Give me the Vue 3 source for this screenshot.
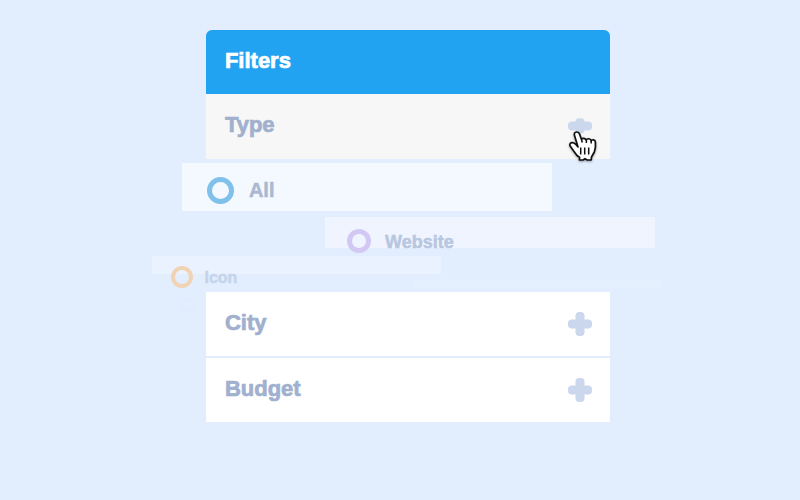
<script setup>
const options = [
  { key: 'all', label: 'All' },
  { key: 'website', label: 'Website' },
  { key: 'icon', label: 'Icon' },
  { key: 'last', label: '' }
]
const sections = ['City', 'Budget']
</script>

<template>
  <main class="stage">
    <section class="filters">
      <header class="row head">Filters</header>
      <div class="row type">
        <span>Type</span>
        <span class="toggle">
          <svg class="plus" viewBox="0 0 24 16" width="24" height="16">
            <rect x="7.5" y="0.3" width="9" height="15" rx="3.5" />
            <rect x="0" y="3.5" width="24" height="9" rx="4" />
          </svg>
          <svg class="cursor" viewBox="0 0 30 32" width="30" height="32">
            <path d="M8.5 2C6.5 2 6 3.8 6.5 5.5L10 17C8.5 15 6.5 12.8 4.6 12.6C2.5 12.4 1.3 14 2 15.8L5.5 20.8L9 25.5L11.5 27.3V30H15L17 28.7L19.2 30H23.2L23.5 27L26.3 22L27.4 17.5V12C27.2 9.5 24 9 23.2 11C22.8 8.3 19.2 8 18.2 10.2C17.5 8 14.5 7.8 13.5 9.4L11.3 3.5C10.6 2.4 9.6 2 8.5 2Z" />
            <path class="lines" d="M13.6 9.8L14.3 12.5M18.4 10.5V13M23.2 11V13.5M12.7 17.5v7M16.7 17.5v7M20.7 17.5v7" />
          </svg>
        </span>
      </div>
      <div class="options">
        <div v-for="o in options" :key="o.key" class="option" :class="o.key">
          <i class="ring"></i>
          <span>{{ o.label }}</span>
        </div>
      </div>
      <div v-for="s in sections" :key="s" class="row section">
        <span>{{ s }}</span>
        <svg class="plus" viewBox="0 0 24 24" width="24" height="24">
          <rect x="7.5" y="0" width="9" height="24" rx="3.8" />
          <rect x="0" y="7.5" width="24" height="9" rx="3.8" />
        </svg>
      </div>
    </section>
  </main>
</template>

<style>
body { background: #e2eefe; }
</style>

<style scoped>
.stage {
  box-sizing: border-box;
  height: 500px;
  padding-top: 30px;
  overflow: hidden;
  background: #e2eefe;
  font-family: "Liberation Sans", Arial, sans-serif;
  font-weight: 700;
  color: #a0b0ce;
}
.filters { width: 403.2px; margin-left: 206.4px; }
.row {
  box-sizing: border-box;
  display: flex;
  align-items: center;
  justify-content: space-between;
  height: 64px;
  padding: 0 18px 2px 18.5px;
  font-size: 22px;
  background: #fff;
  -webkit-text-stroke: 0.7px currentColor;
}
.head { background: #22a3f1; color: #fff; border-radius: 6px 6px 0 0; }
.type { background: #f7f7f7; height: 65px; padding-bottom: 3px; }
.section { margin-bottom: 2px; }
.plus { display: block; fill: #cbd7ec; }
.section .plus { margin-top: 2px; }
.toggle { position: relative; top: 1px; }
.cursor { position: absolute; left: 0.5px; top: 11.5px; fill: #fff; stroke: #111; stroke-width: 1.7; stroke-linejoin: round; filter: drop-shadow(0 1px 1px rgba(0, 0, 0, .35)); }
.lines { fill: none; stroke-width: 1.5; }
.options {
  display: flex;
  flex-direction: column;
  height: 133px;
  box-sizing: border-box;
  padding-top: 4px;
}
.option {
  box-sizing: border-box;
  flex: none;
  display: flex;
  align-items: flex-start;
  -webkit-text-stroke: 0.5px currentColor;
}
.ring { box-sizing: border-box; flex: none; border-radius: 50%; }
.all { width: 370px; height: 48px; margin-left: -24.8px; padding: 0 0 0 25px; gap: 15.3px; background: #f4f8ff; font-size: 20px; color: #a9b9d2; }
.all .ring { width: 27px; height: 27px; margin-top: 14px; border: 5px solid #7fc1e9; }
.all span { line-height: 23px; margin-top: 16px; }
.website { width: 330px; height: 31px; margin: 6px 0 0 118.6px; padding: 0 0 0 22px; gap: 14px; background: #eff4ff; font-size: 18px; color: #b7c7df; }
.website .ring { width: 24px; height: 24px; margin-top: 12px; border: 5px solid #d2c8f3; }
.website span { line-height: 21px; margin-top: 15px; }
.icon { width: 289px; height: 18px; margin: 8px 0 0 -54.4px; padding: 0 0 0 19px; gap: 11.5px; background: #ebf2ff; font-size: 16px; color: #c5d4eb; }
.icon .ring { width: 22px; height: 22px; margin-top: 9.5px; border: 4px solid #efd3b4; }
.icon span { line-height: 18px; margin-top: 13px; }
.last { width: 247px; height: 8px; margin: 6px 0 0 207.6px; background: #e5f0fe; }
.last .ring { width: 13px; height: 13px; margin: 19px 0 0 -232px; border: 1.5px solid #dfecfd; }
</style>
